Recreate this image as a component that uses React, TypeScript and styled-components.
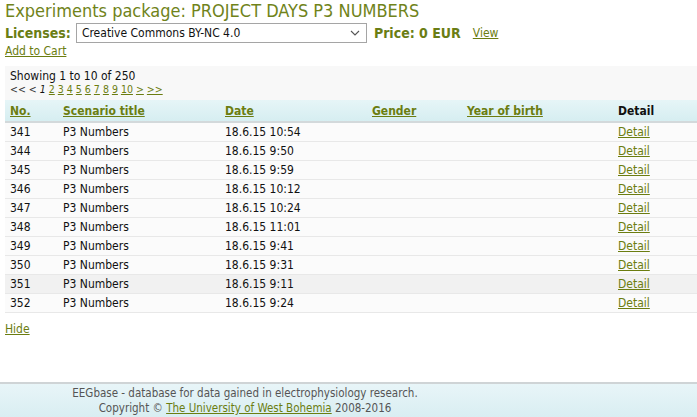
import * as React from 'react'
import styled, { createGlobalStyle } from 'styled-components'

const GlobalStyle = createGlobalStyle`
  body {
    margin: 0;
    background: #ffffff;
    font-family: "DejaVu Sans Condensed", "DejaVu Sans", sans-serif;
    color: #222222;
  }
`

type Row = {
  no: number
  title: string
  date: string
}

const rows: Row[] = [
  { no: 341, title: 'P3 Numbers', date: '18.6.15 10:54' },
  { no: 344, title: 'P3 Numbers', date: '18.6.15 9:50' },
  { no: 345, title: 'P3 Numbers', date: '18.6.15 9:59' },
  { no: 346, title: 'P3 Numbers', date: '18.6.15 10:12' },
  { no: 347, title: 'P3 Numbers', date: '18.6.15 10:24' },
  { no: 348, title: 'P3 Numbers', date: '18.6.15 11:01' },
  { no: 349, title: 'P3 Numbers', date: '18.6.15 9:41' },
  { no: 350, title: 'P3 Numbers', date: '18.6.15 9:31' },
  { no: 351, title: 'P3 Numbers', date: '18.6.15 9:11' },
  { no: 352, title: 'P3 Numbers', date: '18.6.15 9:24' },
]

const pages = [2, 3, 4, 5, 6, 7, 8, 9, 10]

const App: React.FC = () => {
  return (
    <Page>
      <GlobalStyle />
      <Main>
        <Title>Experiments package: PROJECT DAYS P3 NUMBERS</Title>
        <LicenseRow>
          <Label>Licenses:</Label>
          <Select>
            <span>Creative Commons BY-NC 4.0</span>
            <svg width="10" height="6" viewBox="0 0 10 6">
              <path d="M1 1l4 4 4-4" fill="none" stroke="#555" strokeWidth="1.1" />
            </svg>
          </Select>
          <Label>Price: 0 EUR</Label>
          <SmallLink href="#" $gap={12}>View</SmallLink>
        </LicenseRow>
        <SmallLink href="#" $gap={0}>Add to Cart</SmallLink>
        <Panel>
          <Showing>Showing 1 to 10 of 250</Showing>
          <Pager>
            <span>&lt;&lt;</span>
            <span>&lt;</span>
            <Current>1</Current>
            {pages.map(p => (
              <PageLink key={p} href="#">{p}</PageLink>
            ))}
            <PageLink href="#">&gt;</PageLink>
            <PageLink href="#">&gt;&gt;</PageLink>
          </Pager>
          <Table>
            <colgroup>
              <col style={{ width: 53 }} />
              <col style={{ width: 162 }} />
              <col style={{ width: 147 }} />
              <col style={{ width: 95 }} />
              <col style={{ width: 151 }} />
              <col />
            </colgroup>
            <thead>
              <tr>
                <Th><HeadLink href="#">No.</HeadLink></Th>
                <Th><HeadLink href="#">Scenario title</HeadLink></Th>
                <Th><HeadLink href="#">Date</HeadLink></Th>
                <Th><HeadLink href="#">Gender</HeadLink></Th>
                <Th><HeadLink href="#">Year of birth</HeadLink></Th>
                <Th>Detail</Th>
              </tr>
            </thead>
            <tbody>
              {rows.map(r => (
                <Tr key={r.no} $hover={r.no === 351}>
                  <Td>{r.no}</Td>
                  <Td>{r.title}</Td>
                  <Td>{r.date}</Td>
                  <Td />
                  <Td />
                  <Td><DetailLink href="#">Detail</DetailLink></Td>
                </Tr>
              ))}
            </tbody>
          </Table>
        </Panel>
        <HideLink href="#">Hide</HideLink>
      </Main>
      <Footer>
        <FooterText>
          <div>EEGbase - database for data gained in electrophysiology research.</div>
          <div>
            Copyright © <FooterLink href="#">The University of West Bohemia</FooterLink> 2008-2016
          </div>
        </FooterText>
      </Footer>
    </Page>
  )
}

const Page = styled.div`
  width: 697px;
  height: 417px;
  display: flex;
  flex-direction: column;
  overflow: hidden;
`
const Main = styled.div`
  flex: 1;
  padding-left: 5px;
  display: flex;
  flex-direction: column;
  align-items: flex-start;
`
const Title = styled.h1`
  margin: 0;
  font-size: 18px;
  line-height: 21px;
  font-weight: normal;
  color: #70831a;
`
const LicenseRow = styled.div`
  display: flex;
  align-items: center;
  height: 22px;
  margin-top: 1px;
`
const Label = styled.span`
  font-size: 14px;
  font-weight: bold;
  color: #6a7d14;
`
const Select = styled.div`
  margin-left: 5px;
  margin-right: 7px;
  width: 291px;
  height: 20px;
  box-sizing: border-box;
  border: 1px solid #a5a5a5;
  background: #ffffff;
  display: flex;
  align-items: center;
  justify-content: space-between;
  padding: 0 6px 0 5px;
  font-size: 12px;
  color: #111111;
`
const SmallLink = styled.a<{ $gap: number }>`
  font-size: 12px;
  color: #6b7d10;
  text-decoration: underline;
  margin-left: ${p => p.$gap}px;
`
const Panel = styled.div`
  align-self: stretch;
  margin-top: 8px;
  background: #f8f8f8;
  padding-top: 3px;
`
const Showing = styled.div`
  font-size: 12px;
  line-height: 14px;
  padding-left: 5px;
  color: #111111;
`
const Pager = styled.div`
  font-size: 10.5px;
  line-height: 13px;
  padding-left: 5px;
  display: flex;
  gap: 3px;
  color: #333333;
`
const Current = styled.span`
  font-style: italic;
  color: #111111;
`
const PageLink = styled.a`
  color: #6b7d10;
  text-decoration: underline;
`
const Table = styled.table`
  width: 100%;
  border-collapse: collapse;
  margin-top: 4px;
  font-size: 12px;
`
const Th = styled.th`
  text-align: left;
  font-weight: bold;
  height: 21px;
  padding: 0 5px;
  background: linear-gradient(#e6f5f7, #d6eef1);
  border-bottom: 2px solid #d3d9db;
  color: #111111;
`
const HeadLink = styled.a`
  color: #6b7d10;
  text-decoration: underline;
`
const Tr = styled.tr<{ $hover: boolean }>`
  background: ${p => (p.$hover ? '#f1f1f1' : '#fbfbfb')};
  border-bottom: 1px solid #e8e8e8;
`
const Td = styled.td`
  height: 18px;
  padding: 0 5px;
  color: #111111;
`
const DetailLink = styled.a`
  color: #6b7d10;
  text-decoration: underline;
`
const HideLink = styled.a`
  margin-top: 9px;
  font-size: 12px;
  color: #6b7d10;
  text-decoration: underline;
`
const Footer = styled.div`
  height: 31px;
  border-top: 2px solid #cfd4d6;
  background: linear-gradient(#e8f5f8, #d9eef2);
  padding-top: 2px;
`
const FooterText = styled.div`
  width: 490px;
  text-align: center;
  font-size: 11.5px;
  line-height: 15px;
  color: #555555;
`
const FooterLink = styled.a`
  color: #6b7d10;
  text-decoration: underline;
`

export default App
